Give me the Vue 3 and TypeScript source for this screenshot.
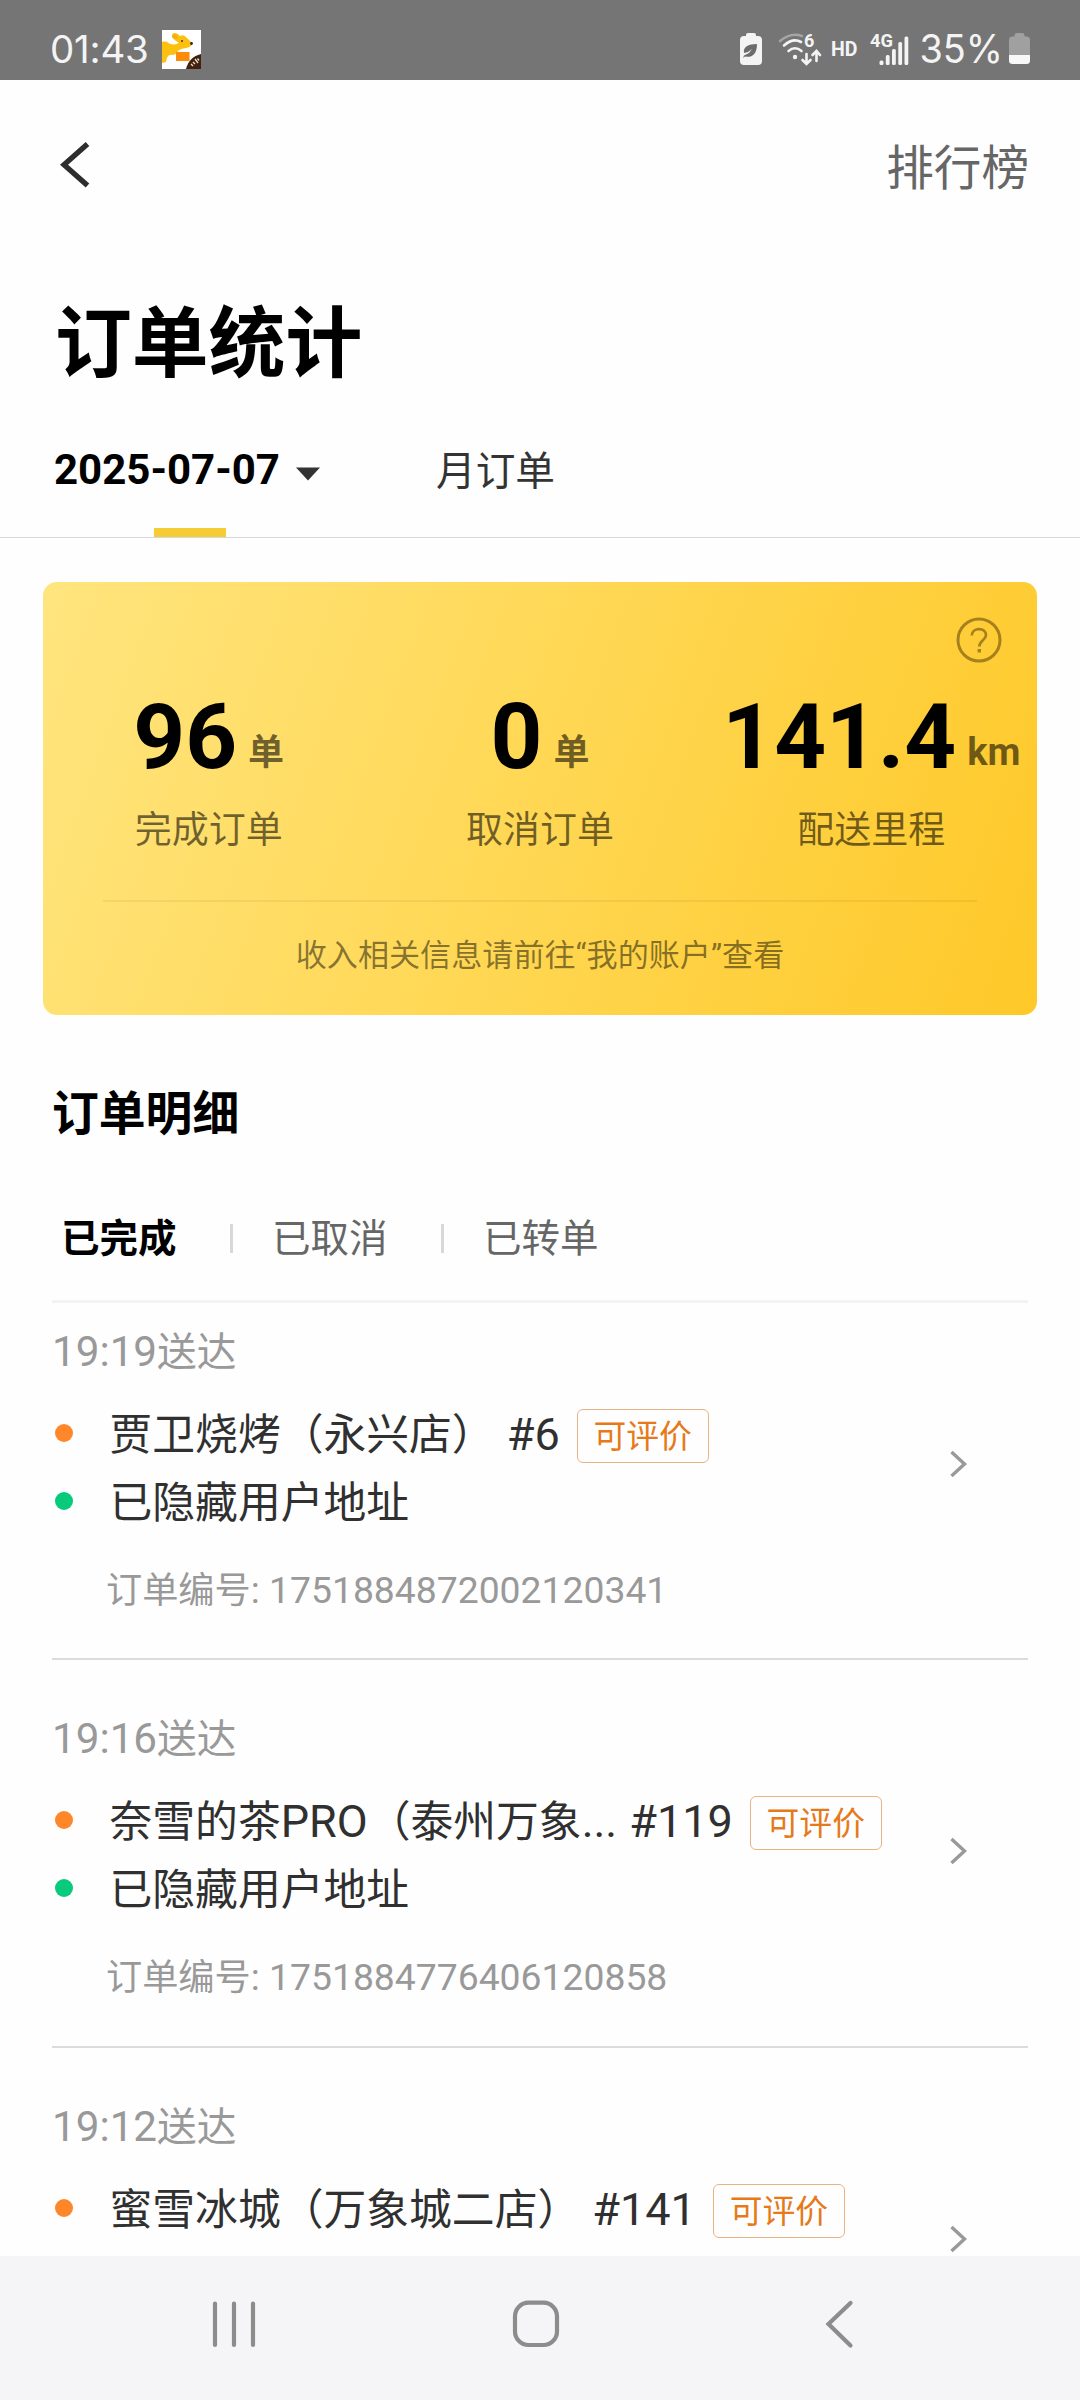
<script setup lang="ts">
interface Stat { value: string; unit: string; label: string }
interface Order { time: string; shop: string; seq: string; address?: string; id?: string }
interface Run { text: string; latin: boolean }

const stats: Stat[] = [
  { value: '96', unit: '单', label: '完成订单' },
  { value: '0', unit: '单', label: '取消订单' },
  { value: '141.4', unit: 'km', label: '配送里程' },
]

const filters: string[] = ['已完成', '已取消', '已转单']

const orders: Order[] = [
  { time: '19:19', shop: '贾卫烧烤（永兴店）', seq: '#6', address: '已隐藏用户地址', id: '1751884872002120341' },
  { time: '19:16', shop: '奈雪的茶PRO（泰州万象...', seq: '#119', address: '已隐藏用户地址', id: '1751884776406120858' },
  { time: '19:12', shop: '蜜雪冰城（万象城二店）', seq: '#141' },
]

// Latin runs are set slightly larger than the Chinese text around them.
function runs(text: string): Run[] {
  return (text.match(/[\x20-\x7e]+|[^\x20-\x7e]+/g) ?? []).map((t) => ({
    text: t,
    latin: /^[\x20-\x7e]/.test(t),
  }))
}
</script>

<template>
  <div class="screen">
    <div class="status">
      <span class="clock">01:43</span>
      <svg class="app-icon" width="39" height="39" viewBox="0 0 39 39">
        <rect width="39" height="39" fill="#fff" />
        <path d="M0 12 C3 11 8 12 14 14 L17 13 C13 10 9 8 10 5 C12 1 16 4 18 6 C21 4 24 7 26 9 L30 13 L30 15 C26 19 20 18 17 20 C15 22 14 25 11 25 C6 24 5 27 4 32 L0 33 Z" fill="#fbc010" />
        <path d="M5 12 C9 10 13 11 15 14 C11 15 7 14 5 12 Z" fill="#fffdf2" />
        <path d="M10 6 C12 3 15 5 16 7 L15 9 C12 9 10 8 10 6 Z" fill="#f0b010" />
        <circle cx="29.500" cy="13.500" r="1.400" fill="#3a2412" />
        <circle cx="20" cy="11" r="0.900" fill="#3a2412" />
        <rect x="14" y="22" width="13.500" height="9" fill="#fb8c0c" />
        <path d="M24 39 C26 31 31 26 39 24 V39 Z" fill="#40220f" />
        <path d="M29 34 l2 2 M31 32 l2 2 M33 29 l3 4 M35.500 28.500 l1.500 2" stroke="#e8dccb" stroke-width="1.300" />
      </svg>
      <svg class="sys" width="292" height="62" viewBox="739 18 292 62">
        <path d="M746 36 v-1 q0-2 2-2 h6 q2 0 2 2 v1 h2 q4 0 4 4 v21 q0 4-4 4 h-14 q-4 0-4-4 v-21 q0-4 4-4 Z" fill="#f4f4f4" />
        <path d="M757 44 C748 44 743 47 744 53 L748 52 L752 49 L749 53 L744 55.500 L743 58 L745 56.500 C751 58 757 55 757 44 Z" fill="#6c6c6c" />
        <g fill="none" stroke-linecap="round" stroke-width="2.600">
          <path d="M780 41 Q791 32 802 36" stroke="#a5a5a5" />
          <path d="M784 45.500 Q793 37.500 801 42" stroke="#f4f4f4" />
          <path d="M788.500 51 Q795 45.500 801.500 51" stroke="#f4f4f4" />
          <path d="M806.500 54 V63 M802.500 60 L806.500 64 L810.500 60 M816.500 61 V52 M812.500 55 L816.500 51 L820 55" stroke="#f4f4f4" />
        </g>
        <circle cx="795" cy="57" r="2.200" fill="#f4f4f4" />
        <text x="804" y="46.500" class="glyph" font-size="18">6</text>
        <text x="831" y="56" class="glyph" font-size="20" textLength="26.500" lengthAdjust="spacingAndGlyphs">HD</text>
        <text x="870" y="46.500" class="glyph" font-size="18.500" textLength="23" lengthAdjust="spacingAndGlyphs">4G</text>
        <g fill="#f4f4f4">
          <rect x="879.500" y="60.500" width="4" height="4.500" rx="1.500" />
          <rect x="885.800" y="55" width="3.800" height="10" rx="1.500" />
          <rect x="892" y="49" width="3.800" height="16" rx="1.500" />
          <rect x="898.300" y="42" width="3.800" height="23" rx="1.500" />
          <rect x="904.500" y="36.500" width="3.800" height="28.500" rx="1.500" />
        </g>
        <text x="919.500" y="63" class="pct" font-size="39.500" textLength="83.500" lengthAdjust="spacingAndGlyphs">35%</text>
        <path d="M1014.500 36.500 v-1 q0-2.500 2.500-2.500 h5 q2.500 0 2.500 2.500 v1 h2 q3.500 0 3.500 3.500 v15 h-21 v-15 q0-3.500 3.500-3.500 Z" fill="#a0a0a0" />
        <path d="M1009 55 h21 v5.500 q0 3.500-3.500 3.500 h-14 q-3.500 0-3.500-3.500 Z" fill="#f8f8f8" />
      </svg>
    </div>

    <main class="page">
      <header class="top">
        <svg width="30" height="50" viewBox="0 0 30 50">
          <path d="M27.500 4 L4 24.800 L27.500 45.500" fill="none" stroke="#2d2d2d" stroke-width="5.400" />
        </svg>
        <span class="rank">排行榜</span>
      </header>

      <h1 class="title">订单统计</h1>

      <nav class="tabs">
        <div class="tab active">
          <span>2025-07-07</span>
          <svg width="24" height="14" viewBox="0 0 24 14"><path d="M0 0.500 H24 L12 13.500 Z" fill="#333" /></svg>
        </div>
        <div class="tab month">月订单</div>
      </nav>

      <section class="card">
        <svg class="help" width="46" height="46" viewBox="0 0 46 46">
          <circle cx="23" cy="23" r="21" fill="none" stroke="currentColor" stroke-width="3" />
          <path d="M15.700 18.500 C16 10 30 10 30 18 C30 23 23.300 23.500 23.300 29.500" fill="none" stroke="currentColor" stroke-width="2.700" />
          <rect x="21.600" y="32" width="3.400" height="3.500" fill="currentColor" />
        </svg>
        <div class="stats">
          <div v-for="s in stats" :key="s.label" class="stat">
            <div class="figure"><b>{{ s.value }}</b><i :class="{ latin: s.unit === 'km' }">{{ s.unit }}</i></div>
            <div class="label">{{ s.label }}</div>
          </div>
        </div>
        <p class="note">收入相关信息请前往“我的账户”查看</p>
      </section>

      <h2 class="subtitle">订单明细</h2>

      <div class="filters">
        <span v-for="(f, i) in filters" :key="f" class="filter" :class="{ on: i === 0 }">{{ f }}</span>
      </div>

      <ul class="orders">
        <li v-for="o in orders" :key="o.time" class="order">
          <div class="time"><span class="lat">{{ o.time }}</span>送达</div>
          <div class="body">
            <div class="lines">
              <div class="line">
                <em class="dot orange"></em>
                <span class="name"><span v-for="(r, i) in runs(o.shop)" :key="i" :class="{ lat: r.latin }">{{ r.text }}</span></span>
                <span class="seq">{{ o.seq }}</span>
                <span class="badge">可评价</span>
              </div>
              <div v-if="o.address" class="line">
                <em class="dot green"></em>
                <span class="name">{{ o.address }}</span>
              </div>
            </div>
            <svg width="20" height="30" viewBox="0 0 20 30">
              <path d="M2.500 3 L15.500 15 L2.500 27" fill="none" stroke="#999" stroke-width="3.400" />
            </svg>
          </div>
          <div v-if="o.id" class="number">订单编号<span class="lat">: {{ o.id }}</span></div>
        </li>
      </ul>
    </main>

    <footer class="navbar">
      <svg width="1080" height="144" viewBox="0 0 1080 144" fill="none" stroke="#8c8c8c" stroke-width="4.200" stroke-linecap="round">
        <path d="M215 47.500 V89 M234 47.500 V89 M253 47.500 V89" />
        <rect x="515" y="46.700" width="42" height="42.300" rx="13.500" />
        <path d="M850.500 47 L828.500 68 L850.500 89.500" />
      </svg>
    </footer>
  </div>
</template>

<style>
html,
body {
  margin: 0;
  background: #fff;
}
</style>

<style scoped>
.screen {
  width: 1080px;
  height: 2400px;
  display: flex;
  flex-direction: column;
  overflow: hidden;
  background: #fefefe;
  font-family: Roboto, 'Noto Sans CJK SC', sans-serif;
  color: #000;
}
.status {
  flex: none;
  height: 80px;
  background: #757575;
  display: flex;
  align-items: center;
  color: #f4f4f4;
  box-sizing: border-box;
  padding: 18px 49px 0 50px;
}
.clock {
  font-family: Inter, sans-serif;
  font-size: 38.5px;
  line-height: 50px;
  width: 112px;
  letter-spacing: -0.2px;
}
.sys {
  margin-left: auto;
}
.glyph {
  fill: #f4f4f4;
  font-family: Roboto, sans-serif;
  font-weight: 700;
}
.pct {
  fill: #f4f4f4;
  font-family: Inter, sans-serif;
}
.page {
  flex: 1;
  min-height: 0;
  overflow: hidden;
}
.top {
  height: 170px;
  display: flex;
  align-items: center;
  justify-content: space-between;
  padding: 0 51px 0 60px;
}
.rank {
  font-size: 47.6px;
  line-height: 60px;
  margin-top: 7px;
  color: #666;
}
.title {
  margin: 45px 0 0 55px;
  font-size: 76.8px;
  line-height: 100px;
  font-weight: 700;
}
.tabs {
  height: 143px;
  box-sizing: border-box;
  border-bottom: 1px solid #d8d8d8;
  padding: 45px 0 0 54px;
  display: flex;
}
.tab {
  line-height: 60px;
  position: relative;
}
.active {
  width: 272px;
  display: flex;
  align-items: flex-start;
  gap: 16px;
  font-size: 42px;
  font-weight: 700;
}
.active::after {
  content: '';
  position: absolute;
  left: 100px;
  bottom: 0;
  width: 72px;
  height: 9px;
  background: #f5cc36;
}
.active svg {
  margin-top: 27px;
}
.month {
  margin: 2px 0 0 110px;
  font-size: 39.7px;
  color: #333;
}
.card {
  position: relative;
  margin: 44px 43px 0;
  height: 433px;
  border-radius: 14px;
  background: linear-gradient(110deg, #ffe57f 0%, #ffd753 50%, #fec828 100%);
}
.help {
  position: absolute;
  top: 35px;
  right: 35px;
  color: rgba(70, 45, 0, 0.48);
}
.stats {
  display: flex;
  padding-top: 100px;
}
.stat {
  flex: 1 1 0;
  width: 0;
  display: flex;
  flex-direction: column;
  align-items: center;
}
.figure {
  display: flex;
  align-items: baseline;
  height: 110px;
  line-height: 110px;
  white-space: nowrap;
}
.figure b {
  font-size: 90.5px;
}
.figure i {
  font-style: normal;
  font-size: 36px;
  line-height: 40px;
  font-weight: 700;
  margin-left: 11px;
  padding-bottom: 3px;
  position: relative;
  top: -3px;
  color: rgba(0, 0, 0, 0.57);
}
.figure i.latin {
  font-size: 38px;
}
.label {
  margin-top: 9px;
  font-size: 37px;
  line-height: 60px;
  color: rgba(0, 0, 0, 0.56);
}
.note {
  margin: 39px 60px 0;
  border-top: 2px solid rgba(0, 0, 0, 0.05);
  padding-top: 24px;
  font-size: 31.1px;
  line-height: 60px;
  text-align: center;
  color: rgba(0, 0, 0, 0.48);
}
.subtitle {
  margin: 69px 0 0 52px;
  font-size: 46.8px;
  line-height: 60px;
  font-weight: 700;
}
.filters {
  margin-left: 61px;
  padding-top: 65px;
  display: flex;
  height: 91px;
}
.filter {
  width: 211px;
  font-size: 38.5px;
  line-height: 60px;
  color: #666;
  position: relative;
}
.filter:not(:last-child)::after {
  content: '';
  position: absolute;
  left: 169px;
  top: 15px;
  width: 3px;
  height: 29px;
  background: #d8d8d8;
}
.filter.on {
  color: #000;
  font-weight: 700;
}
.orders {
  list-style: none;
  margin: 0 52px;
  padding: 0;
  border-top: 3px solid #f3f3f3;
}
.order {
  height: 387.5px;
  box-sizing: border-box;
  border-bottom: 2px solid #dcdcdc;
  padding-top: 49px;
}
.order:first-child {
  height: 357px;
  padding-top: 19px;
}
.time {
  font-size: 39.7px;
  line-height: 60px;
  color: #999;
}
.time .lat {
  font-size: 42.2px;
}
.lat {
  font-size: 1.05em;
}
.body {
  display: flex;
  align-items: center;
  justify-content: space-between;
  padding: 18px 59px 0 3px;
}
.body svg {
  margin-bottom: 10px;
}
.lines {
  height: 136px;
}
.line {
  height: 68px;
  display: flex;
  align-items: center;
  font-size: 42.8px;
  line-height: 60px;
  white-space: nowrap;
  color: #303030;
}
.dot {
  width: 18px;
  height: 18px;
  border-radius: 50%;
  margin: 0 36.5px 4px 0;
}
.orange {
  background: #ff8629;
}
.green {
  background: #07ca7a;
}
.seq {
  font-size: 45px;
  margin-left: 12px;
}
.badge {
  margin: 2px 0 0 17px;
  height: 54px;
  width: 132px;
  box-sizing: border-box;
  border: 1.5px solid #e9b483;
  border-radius: 6px;
  text-align: center;
  font-size: 32.8px;
  line-height: 54px;
  color: #e67a1a;
}
.number {
  margin: 23px 0 0 54px;
  font-size: 36.2px;
  line-height: 60px;
  color: #999;
}
.number .lat {
  font-size: 37.3px;
}
.navbar {
  flex: none;
  height: 144px;
  background: #f5f5f7;
}
.navbar svg {
  display: block;
}
</style>
